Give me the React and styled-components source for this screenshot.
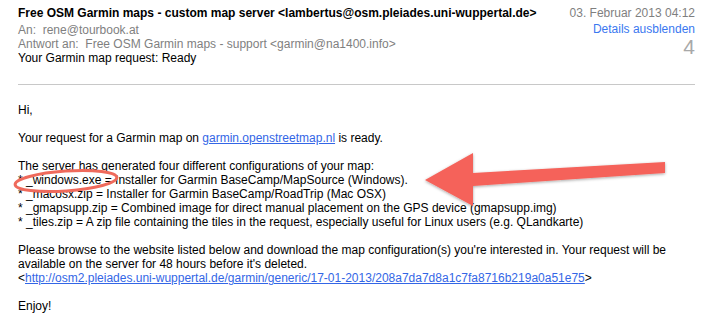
import styled, { createGlobalStyle } from "styled-components";

const GlobalStyle = createGlobalStyle`
  html, body {
    margin: 0;
    padding: 0;
    background: #fff;
  }
`;

const Page = styled.div`
  position: relative;
  width: 710px;
  height: 316px;
  overflow: hidden;
  background: #fff;
  font-family: "Liberation Sans", Arial, sans-serif;
  font-size: 12px;
  color: #000;
`;

const Header = styled.div`
  display: flex;
  justify-content: space-between;
  padding: 6px 15px 0 18px;
  height: 72px;
  box-sizing: border-box;
`;

const HeaderLeft = styled.div`
  display: flex;
  flex-direction: column;
  line-height: 14px;
`;

const Sender = styled.div`
  font-weight: bold;
  margin-bottom: 3px;
`;

const Meta = styled.div`
  color: #7f7f7f;
  white-space: pre;
`;

const Subject = styled.div`
  color: #000;
`;

const HeaderRight = styled.div`
  display: flex;
  flex-direction: column;
  align-items: flex-end;
  line-height: 14px;
`;

const DateText = styled.div`
  color: #7f7f7f;
  margin-bottom: 2px;
`;

const DetailsLink = styled.a`
  color: #3a78f0;
  text-decoration: none;
`;

const Count = styled.div`
  color: #a8a8a8;
  font-size: 21px;
  line-height: 20px;
  margin-top: 1px;
`;

const Divider = styled.hr`
  margin: 12px 15px 0 18px;
  border: 0;
  border-top: 1px solid #c8c8c8;
  height: 0;
`;

const Body = styled.div`
  padding: 18px 18px 0 18px;
  line-height: 14px;
  display: flex;
  flex-direction: column;
  gap: 14px;
`;

const Para = styled.div``;

const Line = styled.div`
  white-space: pre;
`;

const TextLink = styled.a`
  color: #3366e6;
  text-decoration: underline;
`;

const Overlay = styled.svg`
  position: absolute;
  left: 0;
  top: 0;
  pointer-events: none;
`;

export default function App() {
  return (
    <>
      <GlobalStyle />
      <Page>
        <Header>
          <HeaderLeft>
            <Sender>
              Free OSM Garmin maps - custom map server &lt;lambertus@osm.pleiades.uni-wuppertal.de&gt;
            </Sender>
            <Meta>An:  rene@tourbook.at</Meta>
            <Meta>Antwort an:  Free OSM Garmin maps - support &lt;garmin@na1400.info&gt;</Meta>
            <Subject>Your Garmin map request: Ready</Subject>
          </HeaderLeft>
          <HeaderRight>
            <DateText>03. Februar 2013 04:12</DateText>
            <DetailsLink href="#">Details ausblenden</DetailsLink>
            <Count>4</Count>
          </HeaderRight>
        </Header>
        <Divider />
        <Body>
          <Para>Hi,</Para>
          <Para>
            Your request for a Garmin map on <TextLink href="#">garmin.openstreetmap.nl</TextLink> is ready.
          </Para>
          <Para>
            <Line>The server has generated four different configurations of your map:</Line>
            <Line>* _windows.exe = Installer for Garmin BaseCamp/MapSource (Windows).</Line>
            <Line>* _macosx.zip = Installer for Garmin BaseCamp/RoadTrip (Mac OSX)</Line>
            <Line>* _gmapsupp.zip = Combined image for direct manual placement on the GPS device (gmapsupp.img)</Line>
            <Line>* _tiles.zip = A zip file containing the tiles in the request, especially useful for Linux users (e.g. QLandkarte)</Line>
          </Para>
          <Para>
            <Line>Please browse to the website listed below and download the map configuration(s) you're interested in. Your request will be</Line>
            <Line>available on the server for 48 hours before it's deleted.</Line>
            <Line>
              &lt;<TextLink href="#">http://osm2.pleiades.uni-wuppertal.de/garmin/generic/17-01-2013/208a7da7d8a1c7fa8716b219a0a51e75</TextLink>&gt;
            </Line>
          </Para>
          <Para>Enjoy!</Para>
        </Body>
        <Overlay width="710" height="316" viewBox="0 0 710 316">
          <defs>
            <filter id="shadow" x="-10%" y="-30%" width="120%" height="160%">
              <feDropShadow dx="0" dy="1" stdDeviation="1.5" floodColor="#000" floodOpacity="0.35" />
            </filter>
          </defs>
          <ellipse
            cx="66"
            cy="181"
            rx="51"
            ry="10"
            transform="rotate(-4 66 181)"
            fill="none"
            stroke="#ef6a5c"
            strokeWidth="3"
          />
          <polygon
            points="425,180 473,153 473,173 665,162 665,173 473,186 473,206"
            fill="#f5625a"
            filter="url(#shadow)"
          />
        </Overlay>
      </Page>
    </>
  );
}
